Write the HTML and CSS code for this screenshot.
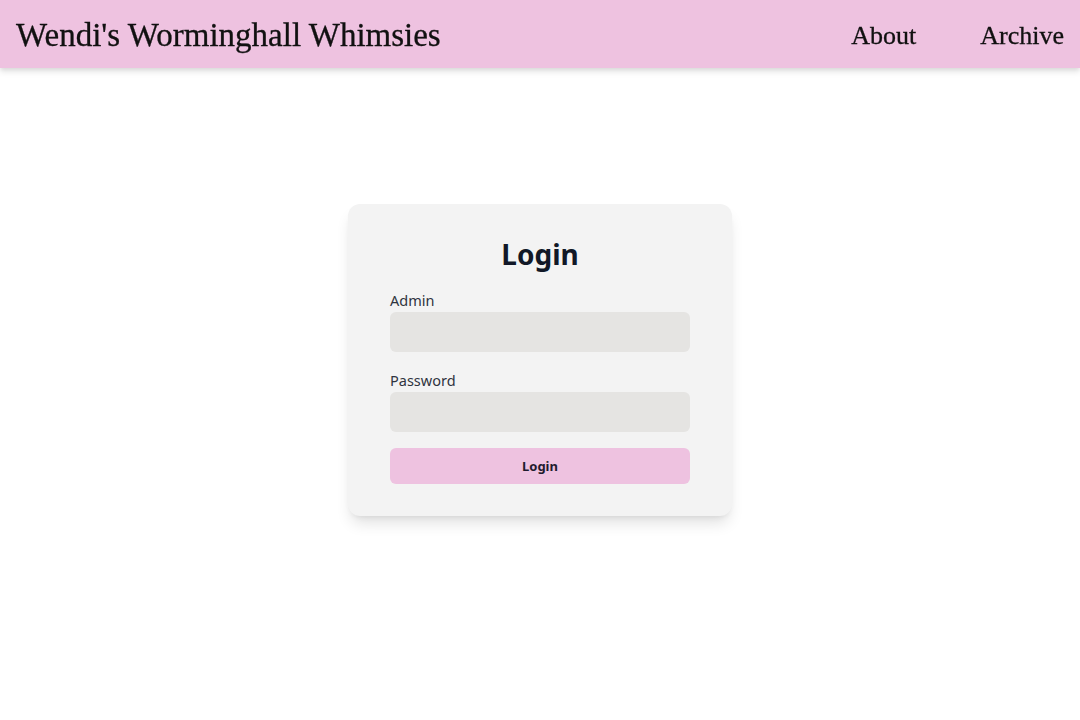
FILE: index.html
```html
<!DOCTYPE html>
<html lang="en">
<head>
<meta charset="utf-8">
<title>Wendi's Worminghall Whimsies</title>
<link rel="stylesheet" href="styles.css">
</head>
<body>
<header class="site-header">
  <div class="brand">Wendi's Worminghall Whimsies</div>
  <nav class="nav">
    <a class="nav-link" href="#">About</a>
    <a class="nav-link" href="#">Archive</a>
  </nav>
</header>
<main class="main">
  <form class="card">
    <h1 class="card-title">Login</h1>
    <label class="label" for="admin">Admin</label>
    <input class="input" id="admin" type="text">
    <label class="label" for="password">Password</label>
    <input class="input" id="password" type="password">
    <button class="button" type="button">Login</button>
  </form>
</main>
</body>
</html>
```
FILE: styles.css
```css
* { box-sizing: border-box; }
html, body { margin: 0; padding: 0; }
body {
  background: #ffffff;
  font-family: "Noto Sans", "Open Sans", sans-serif;
  color: #111827;
}
.site-header {
  position: fixed;
  top: 0; left: 0; right: 0;
  height: 68px;
  background: #eec2e0;
  box-shadow: 0 4px 6px rgba(0,0,0,0.10), 0 2px 4px rgba(0,0,0,0.06);
  display: flex;
  align-items: center;
  justify-content: space-between;
  padding: 3px 16px 0;
  z-index: 10;
}
.brand {
  font-family: "Liberation Serif", "DejaVu Serif", serif;
  font-size: 33px;
  color: #111;
  -webkit-text-stroke: 0.3px #111;
}
.nav { display: flex; gap: 64px; }
.nav-link {
  font-family: "Liberation Serif", "DejaVu Serif", serif;
  font-size: 26px;
  color: #111;
  text-decoration: none;
  -webkit-text-stroke: 0.3px #111;
}
.main {
  min-height: 720px;
  display: flex;
  align-items: center;
  justify-content: center;
}
.card {
  width: 384px;
  background: #f3f3f3;
  border-radius: 12px;
  padding: 32px 42px;
  box-shadow: 0 10px 15px -3px rgba(0,0,0,0.12), 0 4px 6px -4px rgba(0,0,0,0.1);
  display: flex;
  flex-direction: column;
}
.card-title {
  margin: 0 0 16px;
  text-align: center;
  font-size: 28px;
  line-height: 36px;
  font-weight: 700;
  color: #111827;
}
.label {
  font-size: 14.5px;
  line-height: 24px;
  color: #2f3440;
}
.input {
  height: 40px;
  border: none;
  border-radius: 6px;
  background: #e5e4e2;
  margin: 0 0 16px;
  padding: 0 12px;
  font: inherit;
}
.button {
  height: 36px;
  border: none;
  border-radius: 6px;
  background: #eec2e0;
  font: inherit;
  font-size: 13px;
  font-weight: 700;
  color: #1f1b2e;
}
```
